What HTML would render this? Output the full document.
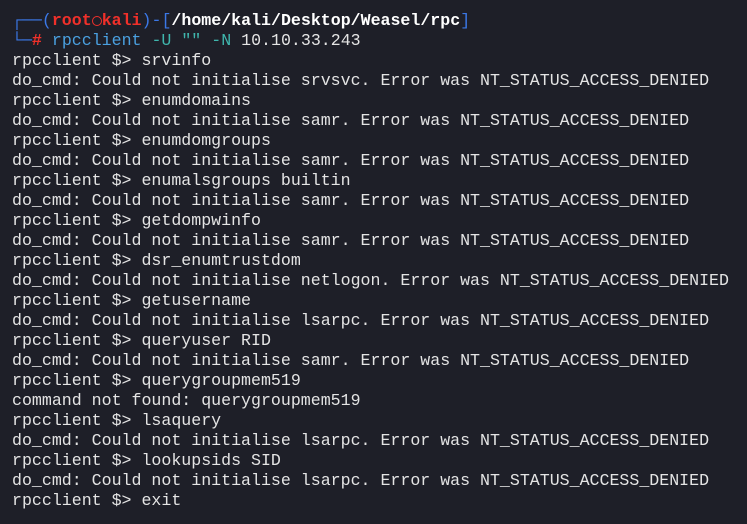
<!DOCTYPE html>
<html><head><meta charset="utf-8"><style>
html,body{margin:0;padding:0;background:#1e1f28;width:747px;height:524px;overflow:hidden}
pre{margin:0;position:absolute;left:12px;top:11px;font-family:"Liberation Mono","DejaVu Sans Mono",monospace;font-size:16.6px;line-height:20px;color:#e4e4e4;white-space:pre}
.b{color:#3b78e7}.r{color:#f0302a;font-weight:bold}.w{color:#fff;font-weight:bold}.c{color:#4aa0e0}.t{color:#3fb6ad}
.sk{display:inline-block;width:10px;height:10px;border:1.5px solid #f0302a;border-radius:50%;box-sizing:border-box;vertical-align:-1px;margin:0 0 0 0}
</style></head><body><pre><span class="b">┌──(</span><span class="r">root<span class="sk"></span>kali</span><span class="b">)-[</span><span class="w">/home/kali/Desktop/Weasel/rpc</span><span class="b">]</span>
<span class="b">└─</span><span class="r">#</span> <span class="c">rpcclient</span> <span class="t">-U</span> <span class="t">""</span> <span class="t">-N</span> 10.10.33.243
rpcclient $&gt; srvinfo
do_cmd: Could not initialise srvsvc. Error was NT_STATUS_ACCESS_DENIED
rpcclient $&gt; enumdomains
do_cmd: Could not initialise samr. Error was NT_STATUS_ACCESS_DENIED
rpcclient $&gt; enumdomgroups
do_cmd: Could not initialise samr. Error was NT_STATUS_ACCESS_DENIED
rpcclient $&gt; enumalsgroups builtin
do_cmd: Could not initialise samr. Error was NT_STATUS_ACCESS_DENIED
rpcclient $&gt; getdompwinfo
do_cmd: Could not initialise samr. Error was NT_STATUS_ACCESS_DENIED
rpcclient $&gt; dsr_enumtrustdom
do_cmd: Could not initialise netlogon. Error was NT_STATUS_ACCESS_DENIED
rpcclient $&gt; getusername
do_cmd: Could not initialise lsarpc. Error was NT_STATUS_ACCESS_DENIED
rpcclient $&gt; queryuser RID
do_cmd: Could not initialise samr. Error was NT_STATUS_ACCESS_DENIED
rpcclient $&gt; querygroupmem519
command not found: querygroupmem519
rpcclient $&gt; lsaquery
do_cmd: Could not initialise lsarpc. Error was NT_STATUS_ACCESS_DENIED
rpcclient $&gt; lookupsids SID
do_cmd: Could not initialise lsarpc. Error was NT_STATUS_ACCESS_DENIED
rpcclient $&gt; exit</pre></body></html>
